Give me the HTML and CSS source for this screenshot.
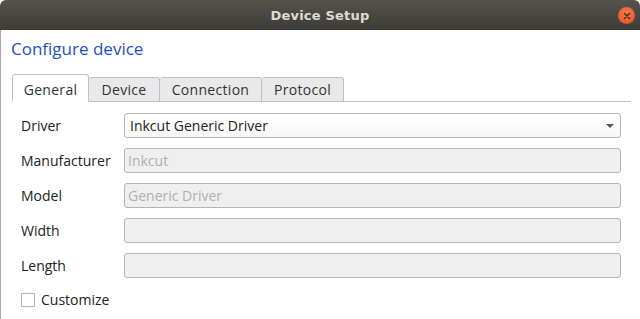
FILE: index.html
```html
<!DOCTYPE html>
<html lang="en">
<head>
<meta charset="UTF-8">
<title>Device Setup</title>
<link rel="stylesheet" href="styles.css">
</head>
<body>
<div class="window">
    <header class="titlebar">
        <span class="title">Device Setup</span>
        <span class="close-btn">
            <svg width="16" height="16" viewBox="0 0 16 16">
                <path d="M5.5 5.5 L10.5 10.5 M10.5 5.5 L5.5 10.5" stroke="#3a2a20" stroke-width="1.3" stroke-linecap="round"/>
            </svg>
        </span>
    </header>
    <main class="content">
        <h1 class="heading">Configure device</h1>
        <nav class="tabs">
            <span class="tab tab-general active">General</span>
            <span class="tab tab-device">Device</span>
            <span class="tab tab-connection">Connection</span>
            <span class="tab tab-protocol">Protocol</span>
            <span class="tab-fill"></span>
        </nav>
        <section class="form">
            <div class="row">
                <label class="label">Driver</label>
                <div class="combo">
                    <span>Inkcut Generic Driver</span>
                    <span class="arrow"></span>
                </div>
            </div>
            <div class="row">
                <label class="label">Manufacturer</label>
                <div class="field disabled">Inkcut</div>
            </div>
            <div class="row">
                <label class="label">Model</label>
                <div class="field disabled">Generic Driver</div>
            </div>
            <div class="row">
                <label class="label">Width</label>
                <div class="field disabled"></div>
            </div>
            <div class="row">
                <label class="label">Length</label>
                <div class="field disabled"></div>
            </div>
            <div class="check-row">
                <span class="checkbox"></span>
                <span>Customize</span>
            </div>
        </section>
    </main>
</div>
</body>
</html>
```

FILE: styles.css
```css
body {
    margin: 0;
    padding: 0;
    background-color: #fff;
    font-family: 'Open Sans', 'DejaVu Sans', sans-serif;
    font-size: 13px;
    color: #3c3c3c;
    overflow: hidden;
}
.window {
    width: 640px;
    height: 319px;
    display: flex;
    flex-direction: column;
}
.titlebar {
    height: 30px;
    flex: none;
    display: flex;
    align-items: center;
    justify-content: center;
    position: relative;
    background: linear-gradient(#56534c, #3c3b37);
    border-radius: 6px 6px 0 0;
}
.title {
    color: #dfdbd2;
    font-family: 'DejaVu Sans', sans-serif;
    font-weight: 700;
    font-size: 13px;
    letter-spacing: 0.2px;
}
.close-btn {
    position: absolute;
    right: 5px;
    top: 7px;
    width: 17px;
    height: 17px;
    border-radius: 50%;
    background: radial-gradient(circle at 50% 35%, #f37b4a, #e0501c);
    display: flex;
    align-items: center;
    justify-content: center;
}
.content {
    flex: 1;
    border-left: 1px solid #a8a8a8;
    padding: 0 0 0 10px;
}
.heading {
    margin: 7px 0 0 0;
    font-size: 17px;
    font-weight: 400;
    color: #1d4fbe;
    height: 27px;
    line-height: 24px;
}
.tabs {
    display: flex;
    align-items: flex-end;
    margin-top: 11px;
    height: 27px;
    padding-left: 1px;
    margin-right: 9px;
}
.tab {
    height: 23px;
    line-height: 23px;
    box-sizing: content-box;
    text-align: center;
    background: #e9e9e9;
    border: 1px solid #c0c0c0;
    border-left: none;
    border-radius: 3px 3px 0 0;
    color: #333;
    font-size: 14px;
    letter-spacing: 0.3px;
}
.tab.active {
    height: 23px;
    padding-top: 3px;
    background: #fff;
    border-left: 1px solid #c0c0c0;
    border-bottom-color: #fff;
}
.tab-general {
    width: 75px;
}
.tab-device {
    width: 70px;
}
.tab-connection {
    width: 101px;
}
.tab-protocol {
    width: 81px;
}
.tab-fill {
    flex: 1;
    border-bottom: 1px solid #c0c0c0;
}
.form {
    padding: 11px 19px 0 10px;
    display: flex;
    flex-direction: column;
    gap: 10px;
}
.row {
    display: flex;
    align-items: center;
    height: 25px;
}
.label {
    width: 103px;
    flex: none;
    color: #222;
    font-size: 14px;
}
.combo, .field {
    flex: 1;
    height: 25px;
    box-sizing: border-box;
    border: 1px solid #b5b5b5;
    border-radius: 3px;
    padding: 0 5px;
    display: flex;
    align-items: center;
    font-size: 14px;
}
.combo {
    background: linear-gradient(#fff, #f7f7f7);
    color: #222;
    justify-content: space-between;
}
.field.disabled {
    background: #efefef;
    color: #b0b0b0;
    padding-left: 3px;
}
.arrow {
    width: 0;
    height: 0;
    border-left: 4px solid transparent;
    border-right: 4px solid transparent;
    border-top: 4px solid #555;
    margin-right: 1px;
}
.check-row {
    display: flex;
    align-items: center;
    gap: 6px;
    margin-top: 2px;
    color: #222;
    font-size: 14px;
}
.checkbox {
    width: 12px;
    height: 12px;
    border: 1px solid #b0b0b0;
    border-radius: 1px;
    background: #fff;
}
```
